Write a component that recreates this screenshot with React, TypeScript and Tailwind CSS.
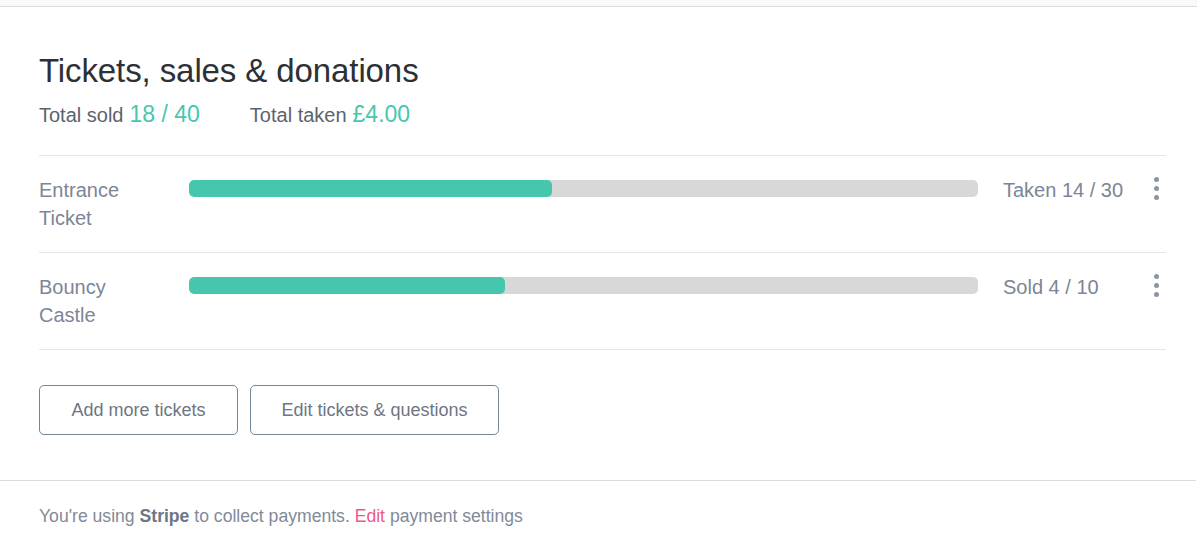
const tickets = [
  { name: ['Entrance', 'Ticket'], verb: 'Taken', sold: 14, total: 30 },
  { name: ['Bouncy', 'Castle'], verb: 'Sold', sold: 4, total: 10 },
]

function Kebab() {
  return (
    <button className="flex flex-col items-center gap-[4px] w-[20px]">
      <span className="block w-[5px] h-[5px] rounded-full bg-[#8a93a3]"></span>
      <span className="block w-[5px] h-[5px] rounded-full bg-[#8a93a3]"></span>
      <span className="block w-[5px] h-[5px] rounded-full bg-[#8a93a3]"></span>
    </button>
  )
}

export default function App() {
  return (
    <div
      className="min-h-screen bg-white"
      style={{ fontFamily: '"Liberation Sans", Arial, sans-serif' }}
    >
      <div className="h-[6px] bg-[#f9f9f9] border-b border-[#dcdcdc] box-content"></div>

      {/* Tickets card */}
      <div className="pl-[39px] pr-[31px] pt-[45px] pb-[45px]">
        <h2 className="text-[33px] leading-[38px] text-[#2d3035] tracking-[-0.1px]">
          Tickets, sales &amp; donations
        </h2>
        <div className="flex items-baseline mt-[10px] leading-[28px] text-[20px] text-[#5d636d]">
          <span>Total sold</span>
          <span className="ml-[6px] text-[23px] text-[#47c6ae]">18 / 40</span>
          <span className="ml-[50px]">Total taken</span>
          <span className="ml-[6px] text-[23px] text-[#47c6ae]">£4.00</span>
        </div>

        <div className="mt-[26px] border-t border-[#e6e6e6]">
          {tickets.map((t) => {
            // percentage is floored, like the original page
            const pct = Math.floor((t.sold / t.total) * 100)
            return (
              <div
                key={t.name.join(' ')}
                className="flex items-start border-b border-[#e6e6e6] pt-[20px] pb-[20px]"
              >
                <div className="w-[150px] text-[20px] leading-[28px] text-[#7d8596]">
                  {t.name[0]}
                  <br />
                  {t.name[1]}
                </div>
                <div className="flex-1 mt-[4px] h-[17px] rounded-[5px] bg-[#d8d8d8] overflow-hidden">
                  <div
                    className="h-full rounded-[5px] bg-[#47c6ae]"
                    style={{ width: `${pct}%` }}
                  ></div>
                </div>
                <div className="w-[168px] pl-[25px] text-[20px] leading-[28px] text-[#7d8596] whitespace-nowrap">
                  {t.verb} {t.sold} / {t.total}
                </div>
                <div className="mt-[1px]">
                  <Kebab />
                </div>
              </div>
            )
          })}
        </div>

        <div className="flex gap-[12px] mt-[35px]">
          <button className="h-[50px] w-[199px] rounded-[5px] border border-[#72889a] text-[18px] text-[#6d7684]">
            Add more tickets
          </button>
          <button className="h-[50px] w-[249px] rounded-[5px] border border-[#72889a] text-[18px] text-[#6d7684]">
            Edit tickets &amp; questions
          </button>
        </div>
      </div>

      {/* Footer */}
      <div className="border-t border-[#dcdcdc] mr-[1px] pl-[39px] pt-[22px] text-[17.6px] leading-[26px] text-[#828a98]">
        You're using <span className="font-bold text-[#6d7684]">Stripe</span> to collect payments.{' '}
        <a className="text-[#ec5a8a]">Edit</a> payment settings
      </div>
    </div>
  )
}
